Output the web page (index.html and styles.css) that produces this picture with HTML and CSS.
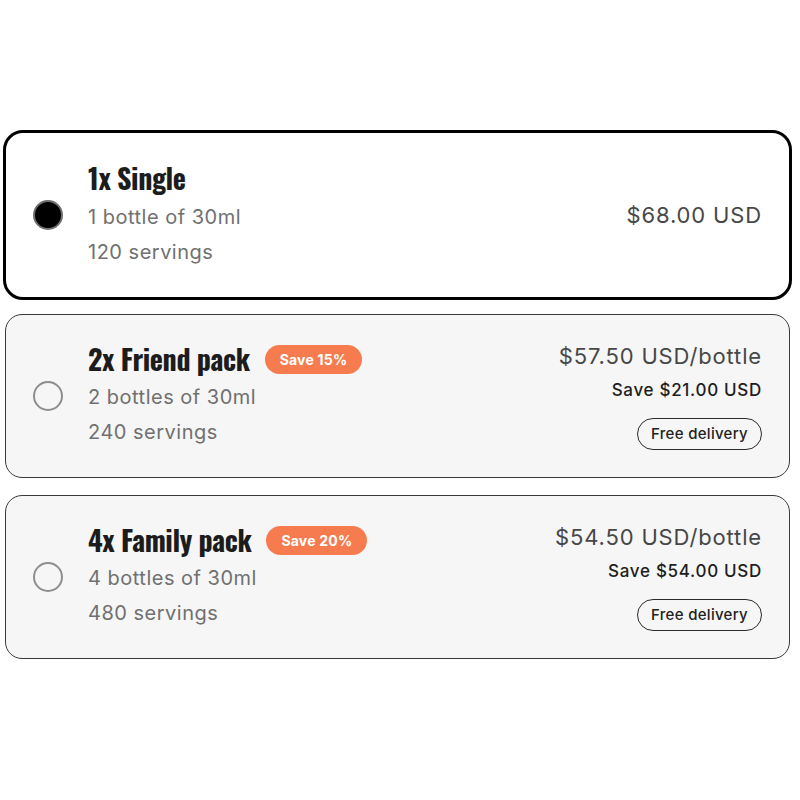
FILE: index.html
```html
<!DOCTYPE html>
<html lang="en">
<head>
<meta charset="utf-8">
<title>Bundle options</title>
<link rel="stylesheet" href="styles.css">
</head>
<body>
<div class="options">
  <div class="card card-selected">
    <span class="radio radio-on"></span>
    <div class="info">
      <div class="title-row"><span class="title">1x Single</span></div>
      <div class="sub sub-first">1 bottle of 30ml</div>
      <div class="sub">120 servings</div>
    </div>
    <div class="pricing">
      <div class="price">$68.00 USD</div>
    </div>
  </div>
  <div class="card">
    <span class="radio"></span>
    <div class="info">
      <div class="title-row"><span class="title">2x Friend pack</span><span class="badge">Save 15%</span></div>
      <div class="sub sub-first">2 bottles of 30ml</div>
      <div class="sub">240 servings</div>
    </div>
    <div class="pricing">
      <div class="price">$57.50 USD/bottle</div>
      <div class="save">Save $21.00 USD</div>
      <div class="pill">Free delivery</div>
    </div>
  </div>
  <div class="card">
    <span class="radio"></span>
    <div class="info">
      <div class="title-row"><span class="title">4x Family pack</span><span class="badge">Save 20%</span></div>
      <div class="sub sub-first">4 bottles of 30ml</div>
      <div class="sub">480 servings</div>
    </div>
    <div class="pricing">
      <div class="price">$54.50 USD/bottle</div>
      <div class="save">Save $54.00 USD</div>
      <div class="pill">Free delivery</div>
    </div>
  </div>
</div>
</body>
</html>
```

FILE: styles.css
```css
* { box-sizing: border-box; }

body {
  margin: 0;
  background: #ffffff;
  font-family: "Inter", "Liberation Sans", sans-serif;
  color: #222222;
}

.options {
  width: 795px;
  padding: 132px 5px 0 5px;
  display: flex;
  flex-direction: column;
  gap: 17px;
}

.card {
  display: flex;
  align-items: center;
  padding: 26px 27px 27px 27px;
  border: 1px solid #3a3a3a;
  border-radius: 17px;
  background: #f6f6f6;
}

.card-selected {
  margin: -2px -2px -3px -2px;
  padding-top: 27px;
  border: 3px solid #000000;
  border-radius: 20px;
  background: #ffffff;
}

.radio {
  flex: none;
  width: 30px;
  height: 30px;
  border-radius: 50%;
  border: 2px solid #8e8e8e;
  margin-right: 25px;
}

.radio-on {
  background: #000000;
  border-color: #6f6f6f;
}

.info {
  flex: 1;
  display: flex;
  flex-direction: column;
}

.title-row {
  display: flex;
  align-items: center;
  gap: 15px;
  height: 36px;
}

.title {
  font-family: "Oswald", "Liberation Sans Narrow", "DejaVu Sans Condensed", sans-serif;
  font-weight: 700;
  font-size: 28px;
  letter-spacing: -0.4px;
  color: #1c1c1c;
  line-height: 36px;
}

.badge {
  display: inline-flex;
  align-items: center;
  height: 29px;
  padding: 0 15px;
  border-radius: 15px;
  background: #f67c4f;
  color: #ffffff;
  font-weight: 700;
  font-size: 14px;
  letter-spacing: 0.2px;
}

.sub {
  font-size: 20px;
  letter-spacing: 0.5px;
  line-height: 35px;
  color: #707070;
}

.sub-first {
  margin-top: 3px;
}

.card-selected .sub-first {
  margin-top: 4px;
}

.pricing {
  display: flex;
  flex-direction: column;
  align-items: flex-end;
}

.price {
  font-size: 22px;
  letter-spacing: 0.85px;
  line-height: 28px;
  color: #474747;
}

.save {
  margin-top: 8px;
  font-size: 17px;
  letter-spacing: 0.7px;
  line-height: 24px;
  font-weight: 500;
  color: #1e1e1e;
}

.pill {
  margin-top: 16px;
  height: 32px;
  display: flex;
  align-items: center;
  padding: 0 13px;
  border: 1px solid #2a2a2a;
  border-radius: 16px;
  font-size: 15px;
  letter-spacing: 0.3px;
  font-weight: 500;
  color: #222222;
}
```
